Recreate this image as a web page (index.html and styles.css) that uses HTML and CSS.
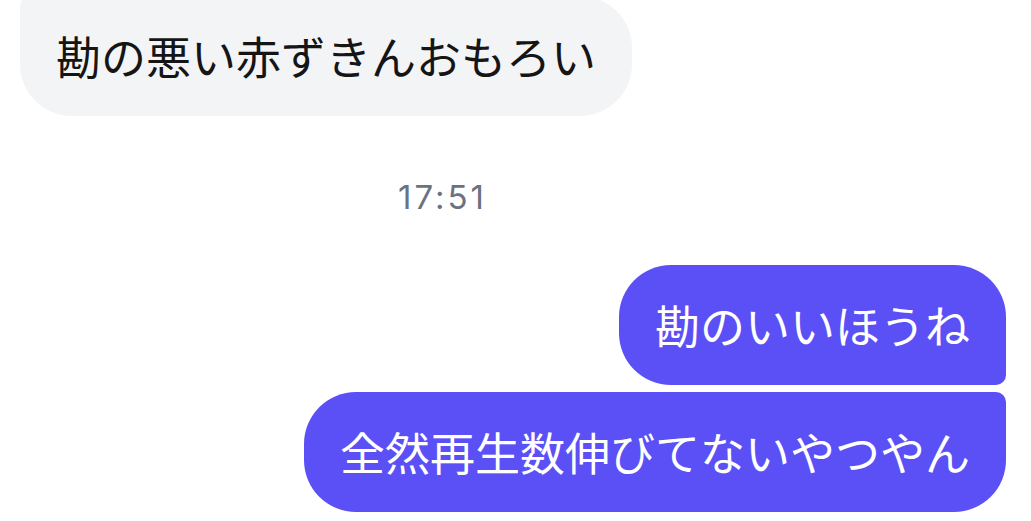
FILE: index.html
```html
<!DOCTYPE html>
<html lang="ja">
<head>
<meta charset="utf-8">
<link rel="stylesheet" href="styles.css">
</head>
<body>
<div class="chat">
  <div class="row in">
    <div class="bubble gray">勘の悪い赤ずきんおもろい</div>
  </div>
  <div class="time">17:51</div>
  <div class="row out">
    <div class="bubble purple first">勘のいいほうね</div>
  </div>
  <div class="row out">
    <div class="bubble purple last">全然再生数伸びてないやつやん</div>
  </div>
</div>
</body>
</html>
```
FILE: styles.css
```css
html, body {
  margin: 0;
  padding: 0;
  background: #ffffff;
}
.chat {
  width: 1031px;
  height: 521px;
  overflow: hidden;
  display: flex;
  flex-direction: column;
  font-family: "Noto Sans CJK JP", "Noto Sans", sans-serif;
}
.row {
  display: flex;
}
.row.in {
  justify-content: flex-start;
  padding-left: 20px;
  margin-top: -4px;
}
.row.out {
  justify-content: flex-end;
  padding-right: 25px;
}
.bubble {
  font-size: 45px;
  line-height: 55px;
  padding: 32px 36px 33px 36px;
  border-radius: 52px;
  white-space: nowrap;
}
.gray {
  background: #f3f4f6;
  color: #151515;
  border-top-left-radius: 10px;
}
.purple {
  background: #5b50f6;
  color: #ffffff;
}
.first {
  border-bottom-right-radius: 10px;
}
.last {
  border-top-right-radius: 10px;
  margin-top: 7px;
}
.time {
  font-family: "Inter", "Noto Sans", sans-serif;
  font-size: 33px;
  line-height: 40px;
  letter-spacing: 3px;
  color: #6b7280;
  padding-left: 398px;
  margin-top: 61px;
  margin-bottom: 48px;
}
```
